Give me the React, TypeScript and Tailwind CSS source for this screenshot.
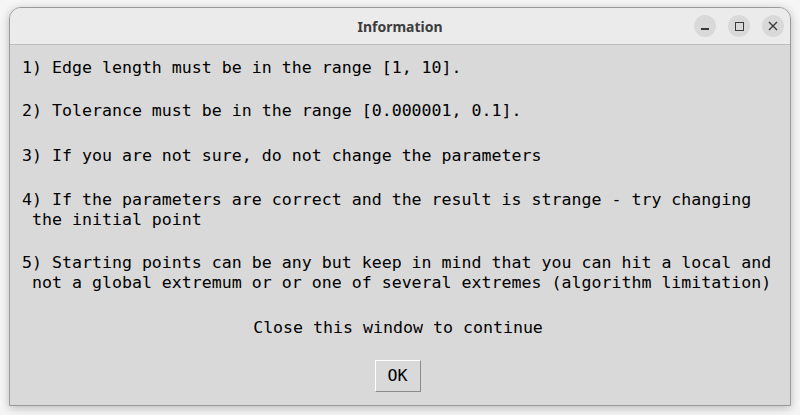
import React from "react";

const mono = { fontFamily: '"DejaVu Sans Mono", "Liberation Mono", monospace' };

export default function App() {
  return (
    <div className="w-[800px] h-[415px] bg-[#f6f6f6] overflow-hidden pt-[7px] pl-[9px]">
      <div className="w-[782px] h-[399px] flex flex-col rounded-t-[12px] border border-[#9a9a9a] bg-[#d9d9d9] shadow-[0_2px_10px_rgba(0,0,0,0.25)] overflow-hidden">
        <div className="relative h-[37px] shrink-0 bg-[#ebebeb] border-b border-[#bdbdbd] flex items-center justify-center">
          <span
            className="text-[14px] font-bold text-[#3d3d3d]"
            style={{ fontFamily: '"Noto Sans", "Open Sans", sans-serif' }}
          >
            Information
          </span>
          <div className="absolute right-[6px] top-[7px] flex gap-[12px]">
            <div className="w-[22px] h-[22px] rounded-full bg-[#d9d9d9] flex items-center justify-center">
              <div className="w-[8px] h-[1.5px] bg-[#3a3a3a] mt-[6px]" />
            </div>
            <div className="w-[22px] h-[22px] rounded-full bg-[#d9d9d9] flex items-center justify-center">
              <div className="w-[9px] h-[9px] border border-[#3a3a3a]" />
            </div>
            <div className="w-[22px] h-[22px] rounded-full bg-[#d9d9d9] flex items-center justify-center">
              <svg width="10" height="10" viewBox="0 0 10 10">
                <path d="M1 1 L9 9 M9 1 L1 9" stroke="#3a3a3a" strokeWidth="1.4" />
              </svg>
            </div>
          </div>
        </div>
        <div
          className="flex flex-col text-[16.6px] leading-[20px] text-black pl-[12px] pt-[13px] whitespace-pre"
          style={mono}
        >
          <div>1) Edge length must be in the range [1, 10].</div>
          <div className="mt-[23px]">2) Tolerance must be in the range [0.000001, 0.1].</div>
          <div className="mt-[25px]">3) If you are not sure, do not change the parameters</div>
          <div className="mt-[24px]">
            {"4) If the parameters are correct and the result is strange - try changing\n the initial point"}
          </div>
          <div className="mt-[23px]">
            {"5) Starting points can be any but keep in mind that you can hit a local and\n not a global extremum or or one of several extremes (algorithm limitation)"}
          </div>
        </div>
        <div
          className="mt-[25px] text-center text-[16.6px] leading-[20px] text-black pr-[4px]"
          style={mono}
        >
          Close this window to continue
        </div>
        <div className="flex justify-center mt-[22px] pr-[5px]">
          <button
            className="w-[46px] h-[32px] bg-[#d9d9d9] border border-t-white border-l-white border-r-[#8a8a8a] border-b-[#8a8a8a] text-[16.6px] text-black flex items-center justify-center"
            style={mono}
          >
            OK
          </button>
        </div>
      </div>
    </div>
  );
}
